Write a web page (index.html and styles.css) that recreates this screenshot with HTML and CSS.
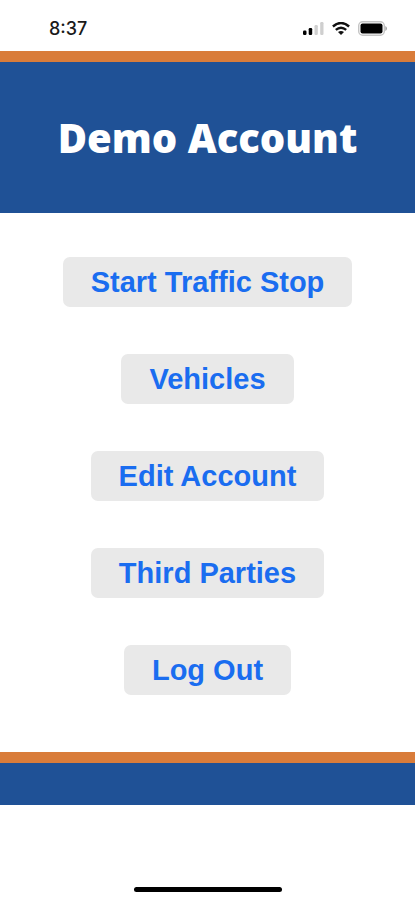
FILE: index.html
```html
<!DOCTYPE html>
<html lang="en">
<head>
    <meta charset="UTF-8">
    <meta name="viewport" content="width=device-width, initial-scale=1">
    <title>Demo Account</title>
    <link rel="stylesheet" href="styles.css">
</head>
<body>
    <div class="status">
      <span class="time">8:37</span>
      <div class="status-icons">
        <svg width="21" height="13" viewBox="0 0 21 13">
          <rect x="0" y="8.500" width="3.500" height="4.500" rx="1.200"/>
          <rect x="5.700" y="6" width="3.500" height="7" rx="1.200"/>
          <rect x="11.500" y="3" width="3.300" height="10" rx="1.200" fill="#cfcfcf"/>
          <rect x="17.200" y="0" width="3.300" height="13" rx="1.200" fill="#cfcfcf"/>
        </svg>
        <svg width="18" height="13" viewBox="0 0 18 13" fill="none" stroke="#111" stroke-width="2.400">
          <path d="M0.900 4.500Q9 -2.500 17.100 4.500M3.800 7.900Q9 3.500 14.200 7.900"/>
          <path d="M6 10Q9 7.800 12 10L9 13Z" fill="#111" stroke="none"/>
        </svg>
        <svg width="29" height="15" viewBox="0 0 29 15">
          <rect x="0.700" y="0.700" width="25.600" height="13.600" rx="4" fill="#fff" stroke="#c4c4c4" stroke-width="1.400"/>
          <rect x="2.500" y="2.500" width="22" height="10" rx="2"/>
          <path d="M27.300 5Q29 5.700 29 7.500T27.300 10Z" fill="#a5a5a5"/>
        </svg>
      </div>
    </div>
    <header class="head">
      <h1>Demo Account</h1>
    </header>
    <main class="menu">
      <button type="button">Start Traffic Stop</button>
      <button type="button">Vehicles</button>
      <button type="button">Edit Account</button>
      <button type="button">Third Parties</button>
      <button type="button">Log Out</button>
    </main>
    <footer class="foot"></footer>
    <div class="home-bar"></div>
</body>
</html>
```
FILE: styles.css
```css
*{
  box-sizing: border-box;
}
body{
  margin: 0;
  min-height: 100vh;
  display: flex;
  flex-direction: column;
  background-color: white;
  font-family: "Liberation Sans", Arial, sans-serif;
}
.status{
  display: flex;
  justify-content: space-between;
  align-items: center;
  height: 51px;
  padding: 5px 28px 0 49px;
}
.time{
  color: #1a1a1a;
  font-family: Inter, sans-serif;
  font-size: 18px;
  font-weight: 500;
}
.status-icons{
  display: flex;
  align-items: center;
  gap: 8px;
}
.head{
  display: flex;
  justify-content: center;
  align-items: center;
  height: 162px;
  border-top: 11px solid #d97c3a;
  background-color: #1f5196;
}
h1{
  margin: 0;
  color: white;
  font-family: "Noto Sans", sans-serif;
  font-size: 40px;
  font-weight: 900;
}
.menu{
  display: flex;
  flex-direction: column;
  align-items: center;
  gap: 47px;
  padding: 44px 0 57px;
}
.menu button{
  height: 50px;
  padding: 0 28px;
  border: none;
  border-radius: 7px;
  background-color: #e9e9e9;
  color: #1a6df0;
  font-family: inherit;
  font-size: 29px;
  font-weight: bold;
}
.foot{
  height: 53px;
  border-top: 11px solid #d97c3a;
  background-color: #1f5196;
}
.home-bar{
  width: 148px;
  height: 5px;
  margin: auto auto 8px;
  border-radius: 3px;
  background-color: black;
}
```
